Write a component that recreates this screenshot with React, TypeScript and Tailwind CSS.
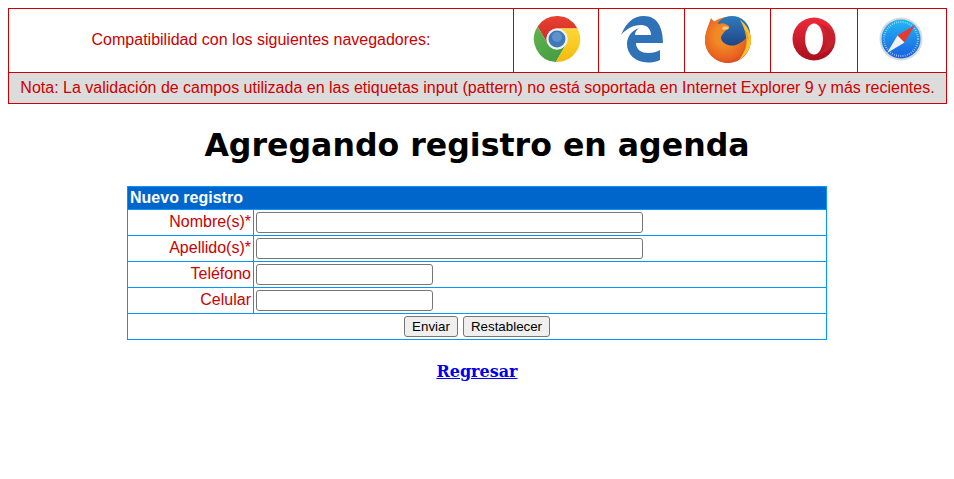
function ChromeIcon() {
  return (
    <svg width="48" height="48" viewBox="0 0 48 48">
      <defs>
        <linearGradient id="cr" x1="0" y1="0" x2="0" y2="1">
          <stop offset="0" stopColor="#e8412f" />
          <stop offset="1" stopColor="#c92a2a" />
        </linearGradient>
        <linearGradient id="cg" x1="0" y1="0" x2="1" y2="1">
          <stop offset="0" stopColor="#62b34d" />
          <stop offset="1" stopColor="#3f9a3f" />
        </linearGradient>
        <linearGradient id="cy" x1="0" y1="0" x2="0" y2="1">
          <stop offset="0" stopColor="#fdd836" />
          <stop offset="1" stopColor="#f6b90f" />
        </linearGradient>
      </defs>
      <path d="M4.66 11.5 A23 23 0 0 1 44.5 13.5 L24 13.5 A10.5 10.5 0 0 0 14.91 29.25Z" fill="url(#cr)" />
      <path d="M22.84 47 A23 23 0 0 1 4.66 11.5 L14.91 29.25 A10.5 10.5 0 0 0 33.09 29.25Z" fill="url(#cg)" />
      <path d="M44.5 13.5 A23 23 0 0 1 22.84 47 L33.09 29.25 A10.5 10.5 0 0 0 24 13.5Z" fill="url(#cy)" />
      <circle cx="24" cy="24" r="10.5" fill="#eef1f4" />
      <circle cx="24" cy="24" r="8.5" fill="#3f78b8" />
      <circle cx="24" cy="22" r="5" fill="#6d9dd1" opacity="0.7" />
    </svg>
  );
}

function EdgeIcon() {
  return (
    <svg width="44" height="47" viewBox="0 0 42 47">
      <path
        d="M0 19 C5 7 12 0 23 0 C36 0 42 11 42 27 L15 27 C15 34 21 37 27 37 C32 37 36 36 39 34 L39 44 C35 46 31 46.5 27 46.5 C14 46.5 6 38 6 28 C6 21 10 15 18 12 C15 14 14 17 14 19 L30 19 C30 13 26 9 20 9 C12 9 5 13 0 19Z"
        fill="#2f72b8"
      />
    </svg>
  );
}

function FirefoxIcon() {
  return (
    <svg width="48" height="48" viewBox="0 0 48 48">
      <defs>
        <linearGradient id="ffb" x1="0" y1="0" x2="0" y2="1">
          <stop offset="0" stopColor="#2f7cbd" />
          <stop offset="1" stopColor="#1b3a78" />
        </linearGradient>
        <radialGradient id="ffo" cx="0.45" cy="0.4" r="0.7">
          <stop offset="0.3" stopColor="#f08a26" />
          <stop offset="0.75" stopColor="#e8601f" />
          <stop offset="1" stopColor="#c5391e" />
        </radialGradient>
      </defs>
      <circle cx="24" cy="25" r="23" fill="url(#ffo)" />
      <circle cx="28" cy="19" r="18" fill="url(#ffb)" />
      <path d="M3 14 C4 10 6 7 7 3 C9 6 12 8 15 9 C19 7 22 9 25 11 C26 13 24 15 22 15 C20 18 17 20 17 23 C18 29 26 32 32 30 C37 28 41 25 44 21 C44 33 36 47 24 48 C10 47 1 37 1 25 C1 21 2 17 3 14Z" fill="url(#ffo)" />
      <path d="M19 12 C22 11 24 12 25 13 C23 15 20 15 18 14Z" fill="#f9c98a" />
      <path d="M36 5 C42 9 47 17 47 25 C47 33 42 41 35 45 C41 37 44 29 42 21 C41 15 39 10 36 5Z" fill="#fbc52e" />
      <path d="M40 13 C43 17 45 21 44 26 C43 22 42 17 40 13Z" fill="#f58a1f" />
    </svg>
  );
}

function OperaIcon() {
  return (
    <svg width="44" height="44" viewBox="0 0 44 44">
      <defs>
        <linearGradient id="op" x1="0" y1="0" x2="0" y2="1">
          <stop offset="0" stopColor="#ee2a3a" />
          <stop offset="1" stopColor="#a80f1c" />
        </linearGradient>
      </defs>
      <circle cx="22" cy="22" r="21.5" fill="url(#op)" />
      <ellipse cx="22" cy="22" rx="9" ry="15.5" fill="#fff" />
      <path d="M27 7 C37 9 42.5 16 42.5 22 C42.5 28 37 35 27 37 C32 34 35 28 35 22 C35 16 32 10 27 7Z" fill="#c4212f" />
    </svg>
  );
}

function SafariIcon() {
  return (
    <svg width="44" height="44" viewBox="0 0 44 44">
      <defs>
        <linearGradient id="sf" x1="0" y1="0" x2="0" y2="1">
          <stop offset="0" stopColor="#21b8f5" />
          <stop offset="1" stopColor="#1a5fe0" />
        </linearGradient>
      </defs>
      <circle cx="22" cy="22" r="21.5" fill="#d9d9d9" />
      <circle cx="22" cy="22" r="19.5" fill="url(#sf)" />
      <circle cx="22" cy="22" r="17" fill="none" stroke="#cfe6fb" strokeWidth="2" strokeDasharray="0.6 1.6" />
      <path d="M36 8 L18.5 18.5 L25.5 25.5Z" fill="#e8392f" />
      <path d="M8 36 L18.5 18.5 L25.5 25.5Z" fill="#f2f2f2" />
    </svg>
  );
}

const browsers = [
  { Icon: ChromeIcon, width: "w-[85px]", shift: "pl-[1px]" },
  { Icon: EdgeIcon, width: "w-[86px]", shift: "pl-0" },
  { Icon: FirefoxIcon, width: "w-[86px]", shift: "pl-0" },
  { Icon: OperaIcon, width: "w-[87px]", shift: "pl-0" },
  { Icon: SafariIcon, width: "w-[89px]", shift: "pr-[2px]" },
];

const fields = [
  { label: "Nombre(s)*", input: "w-[387px]" },
  { label: "Apellido(s)*", input: "w-[387px]" },
  { label: "Teléfono", input: "w-[177px]" },
  { label: "Celular", input: "w-[177px]" },
];

export default function App() {
  return (
    <div className="bg-white min-h-[479px] p-2 font-['Liberation_Sans',Arial,sans-serif] text-[16px]">
      <table className="w-[938px] table-fixed border border-[#cc0000] text-[#cc0000]">
        <colgroup>
          <col className="w-[505px]" />
          {browsers.map((b, i) => (
            <col key={i} className={b.width} />
          ))}
        </colgroup>
        <tbody>
          <tr className="h-[64px]">
            <td className="border border-[#cc0000] pb-[2px] text-center">
              Compatibilidad con los siguientes navegadores:
            </td>
            {browsers.map(({ Icon, shift }, i) => (
              <td key={i} className="border border-[#cc0000]">
                <div className={`flex justify-center pb-[3px] ${shift}`}>
                  <Icon />
                </div>
              </td>
            ))}
          </tr>
          <tr className="bg-[#dcdcdc]">
            <td colSpan={6} className="h-[31px] border border-[#cc0000] pb-[1px] text-center leading-[24px]">
              Nota: La validación de campos utilizada en las etiquetas input (pattern) no está soportada en Internet Explorer 9 y más recientes.
            </td>
          </tr>
        </tbody>
      </table>

      <h1 className="mt-[23px] mb-[22px] text-center text-[31.6px] leading-[37px] font-bold text-black font-['DejaVu_Sans',Verdana,sans-serif]">
        Agregando registro en agenda
      </h1>

      <table className="mx-auto w-[700px] table-fixed border border-[#0099ff]">
        <colgroup>
          <col className="w-[126px]" />
          <col />
        </colgroup>
        <tbody>
          <tr className="bg-[#0066cc]">
            <td colSpan={2} className="h-[23px] border border-[#0099ff] px-[2px] font-bold leading-[20px] text-white">
              Nuevo registro
            </td>
          </tr>
          {fields.map((f) => (
            <tr key={f.label}>
              <td className="h-[26px] border border-[#0099ff] pr-[2px] pb-[2px] text-right leading-[22px] text-[#cc0000]">
                {f.label}
              </td>
              <td className="border border-[#0099ff] px-[2px]">
                <input
                  type="text"
                  className={`${f.input} block h-[21px] rounded-[3px] border border-[#767676] bg-white`}
                />
              </td>
            </tr>
          ))}
          <tr>
            <td colSpan={2} className="h-[26px] border border-[#0099ff]">
              <div className="flex justify-center gap-[5px]">
                <button className="h-[21px] w-[54px] rounded-[3px] border border-[#767676] bg-[#efefef] text-[13.33px] text-black">
                  Enviar
                </button>
                <button className="h-[21px] w-[87px] rounded-[3px] border border-[#767676] bg-[#efefef] text-[13.33px] text-black">
                  Restablecer
                </button>
              </div>
            </td>
          </tr>
        </tbody>
      </table>

      <div className="mt-[20px] text-center">
        <a href="#" className="font-['DejaVu_Serif',Georgia,serif] text-[16px] font-bold text-[#0000ee] underline">
          Regresar
        </a>
      </div>
    </div>
  );
}
